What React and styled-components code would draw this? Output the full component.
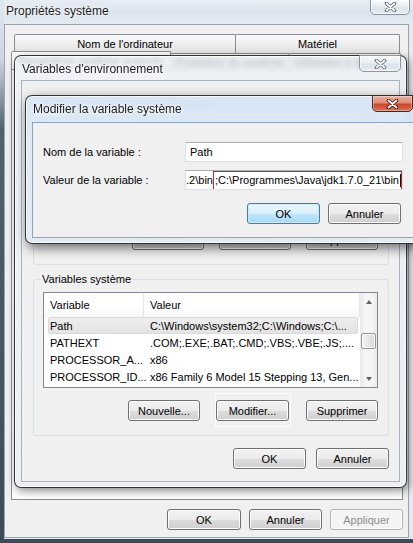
import React from "react";
import styled, { createGlobalStyle } from "styled-components";

const GlobalStyle = createGlobalStyle`
  html, body {
    margin: 0;
    padding: 0;
  }
  body {
    width: 413px;
    height: 543px;
    overflow: hidden;
    background: #3b4959;
    font-family: "Liberation Sans", Arial, sans-serif;
    font-size: 11px;
    color: #000;
  }
`;

const Desktop = styled.div`
  position: relative;
  width: 413px;
  height: 543px;
  overflow: hidden;
`;

// ---- generic window chrome (Win7 aero) ----

const OuterWindow = styled.div`
  height: 543px;
  box-sizing: border-box;
  display: flex;
  flex-direction: column;
  padding: 0 4px 5px 4px;
  background:
    linear-gradient(to bottom, #dfe7ef 0, #cdd6df 60px, #52606f 130px, #3c4a5a 100%) left top / 4px 100% no-repeat,
    linear-gradient(to top, #3b4959 0, #3b4959 4px, transparent 4px),
    linear-gradient(to bottom, #e6edf5 0, #dbe3ec 12px, #e4eaf1 24px, #e3e9f0 100%);
`;

const TitleBar = styled.div`
  display: flex;
  justify-content: space-between;
  align-items: flex-start;
  height: ${(p) => p.$height}px;
  padding-left: ${(p) => p.$pad}px;
  margin: 0 ${(p) => p.$bleed || 0}px;
  flex-shrink: 0;
`;

const TitleText = styled.span`
  padding-top: ${(p) => p.$top}px;
  font-size: 12px;
  color: #1b1b1b;
  text-shadow: 0 0 6px #fff, 0 0 3px #fff;
  white-space: nowrap;
`;

const CloseButton = styled.div`
  width: ${(p) => p.$w}px;
  height: ${(p) => p.$h}px;
  margin-right: ${(p) => p.$right}px;
  margin-top: -1px;
  box-sizing: border-box;
  display: flex;
  align-items: center;
  justify-content: center;
  border: 1px solid ${(p) => (p.$active ? "#5b1e12" : "#8a96a5")};
  border-radius: 0 0 5px 5px;
  background: ${(p) =>
    p.$active
      ? "linear-gradient(to bottom, #eab0a2 0%, #e08c77 45%, #c9472c 55%, #d4735a 100%)"
      : "linear-gradient(to bottom, #f7f9fc 0%, #e9eef4 45%, #dbe3ec 55%, #e6ecf2 100%)"};
  box-shadow: inset 0 0 0 1px rgba(255, 255, 255, ${(p) => (p.$active ? 0.35 : 0.7)});
`;

const CloseGlyph = ({ dark }) => (
  <svg width="13" height="10" viewBox="0 0 13 10">
    <path d="M2.5 1.5 L10.5 8.5 M10.5 1.5 L2.5 8.5" stroke={dark} strokeWidth="3.6" strokeLinecap="round" />
    <path d="M2.5 1.5 L10.5 8.5 M10.5 1.5 L2.5 8.5" stroke="#fff" strokeWidth="1.7" strokeLinecap="round" />
  </svg>
);

const Client = styled.div`
  flex: 1;
  display: flex;
  flex-direction: column;
  min-height: 0;
  border: 1px solid ${(p) => p.$edge};
  background: #f0f0f0;
  padding: ${(p) => p.$pad};
`;

// ---- floating dialogs ----

const Dialog = styled.div`
  position: absolute;
  left: ${(p) => p.$x}px;
  top: ${(p) => p.$y}px;
  width: ${(p) => p.$w}px;
  height: ${(p) => p.$h}px;
  box-sizing: border-box;
  display: flex;
  flex-direction: column;
  padding: 0 6px 5px 6px;
  border: 1px solid rgba(20, 20, 20, 0.85);
  border-radius: 7px;
  background: ${(p) =>
    p.$active
      ? "linear-gradient(to bottom, rgba(214,228,244,0.96), rgba(222,233,246,0.96) 40px, rgba(226,236,247,0.98))"
      : "linear-gradient(to bottom, rgba(233,238,244,0.72), rgba(236,240,245,0.9) 40px, rgba(234,239,244,0.95))"};
  backdrop-filter: blur(2.5px);
  box-shadow: inset 0 0 0 1px rgba(255, 255, 255, 0.75),
    ${(p) => (p.$active ? "2px 4px 12px rgba(0,0,0,0.55)" : "2px 3px 8px rgba(0,0,0,0.45)")};
`;

// ---- tabs ----

const TabArea = styled.div`
  flex: 1;
  display: flex;
  flex-direction: column;
  min-height: 0;
`;

const TabRow = styled.div`
  display: flex;
  align-items: flex-end;
  height: ${(p) => p.$h}px;
  padding-left: ${(p) => p.$indent}px;
  padding-right: 2px;
`;

const Tab = styled.div`
  width: ${(p) => p.$w}px;
  height: ${(p) => (p.$selected ? p.$h + 2 : p.$h)}px;
  box-sizing: border-box;
  display: flex;
  align-items: center;
  justify-content: center;
  border: 1px solid #898c95;
  border-bottom: none;
  margin-right: -1px;
  border-radius: 2px 2px 0 0;
  background: ${(p) =>
    p.$selected ? "#fff" : "linear-gradient(to bottom, #fbfbfb, #eeeeee 50%, #e3e3e3)"};
  white-space: nowrap;
`;

const TabPanel = styled.div`
  flex: 1;
  border: 1px solid #898c95;
  background: #fff;
`;

// ---- buttons ----

const ButtonRow = styled.div`
  display: flex;
  justify-content: flex-end;
  align-items: center;
  gap: ${(p) => p.$gap}px;
  margin-top: ${(p) => p.$top}px;
  padding-right: ${(p) => p.$right || 0}px;
`;

const Button = styled.div`
  width: ${(p) => p.$w || 73}px;
  height: 21px;
  box-sizing: border-box;
  display: flex;
  align-items: center;
  justify-content: center;
  border: 1px solid ${(p) => (p.$default ? "#3c7fb1" : p.$disabled ? "#adb2b5" : "#707070")};
  border-radius: 3px;
  color: ${(p) => (p.$disabled ? "#8d8d8d" : "#000")};
  background: ${(p) =>
    p.$default
      ? "linear-gradient(to bottom, #eaf6fd 0%, #d9f0fc 50%, #bee6fd 51%, #a7d9f5 100%)"
      : p.$disabled
      ? "#f4f4f4"
      : "linear-gradient(to bottom, #f2f2f2 0%, #ebebeb 50%, #dddddd 51%, #cfcfcf 100%)"};
  box-shadow: inset 0 0 0 1px ${(p) => (p.$default ? "#c9e9fa" : "#fcfcfc")};
  white-space: nowrap;
`;

const FocusFrame = styled.div`
  display: flex;
  padding: 6px 1px 5px 0;
  margin: -7px 0 -6px;
  border: 1px solid #fbfbfb;
`;

// ---- group boxes & list view ----

const Group = styled.fieldset`
  margin: 0;
  padding: 6px 10px 14px 9px;
  border: 1px solid #d5dfe5;
  border-radius: 3px;
  min-width: 0;
`;

const Legend = styled.legend`
  padding: 0 2px;
  margin-left: -3px;
  line-height: 13px;
`;

const ListView = styled.div`
  display: flex;
  height: ${(p) => p.$h}px;
  border: 1px solid #828790;
  background: #fff;
`;

const ListBody = styled.div`
  flex: 1;
  display: flex;
  flex-direction: column;
  min-width: 0;
`;

const HeaderRow = styled.div`
  display: grid;
  grid-template-columns: 100px 1fr;
  height: 24px;
  background: linear-gradient(to bottom, #fff, #fff 60%, #f6f7f8);
`;

const HeaderCell = styled.div`
  display: flex;
  align-items: center;
  padding-left: 6px;
  border-right: 1px solid #e5e5e5;
`;

const Row = styled.div`
  display: grid;
  grid-template-columns: 96px 1fr;
  height: 17px;
  box-sizing: border-box;
  margin: 0 2px 0 4px;
  align-items: center;
  white-space: nowrap;
  line-height: 14px;
  border: 1px solid ${(p) => (p.$selected ? "#dadada" : "transparent")};
  border-radius: 2px;
  background: ${(p) => (p.$selected ? "linear-gradient(to bottom, #eeeeee, #e3e3e3)" : "transparent")};
`;

const Cell = styled.span`
  padding-left: ${(p) => p.$pad}px;
`;

const ScrollBar = styled.div`
  width: 17px;
  display: flex;
  flex-direction: column;
  background: linear-gradient(to right, #e9e9e9, #f5f5f5 30%, #f5f5f5 70%, #eaeaea);
`;

const Arrow = styled.div`
  height: 17px;
  display: flex;
  align-items: center;
  justify-content: center;
  &::after {
    content: "";
    border-left: 3.5px solid transparent;
    border-right: 3.5px solid transparent;
    ${(p) => (p.$down ? "border-top: 4px solid #606060;" : "border-bottom: 4px solid #606060;")}
  }
`;

const Track = styled.div`
  flex: 1;
`;

const Thumb = styled.div`
  height: 16px;
  margin: ${(p) => p.$offset}px 1px 0;
  box-sizing: border-box;
  border: 1px solid #979797;
  border-radius: 2px;
  background: linear-gradient(to right, #f4f4f4, #e6e6e6 50%, #d9d9d9);
  box-shadow: inset 0 0 0 1px #fbfbfb;
`;

// ---- edit dialog form ----

const Field = styled.div`
  display: flex;
  align-items: center;
  margin-bottom: ${(p) => p.$gap}px;
`;

const Label = styled.span`
  width: 142px;
  flex-shrink: 0;
`;

const TextBox = styled.div`
  flex: 1;
  height: 20px;
  box-sizing: border-box;
  display: flex;
  align-items: center;
  justify-content: ${(p) => (p.$scrolled ? "flex-end" : "flex-start")};
  padding-left: ${(p) => (p.$scrolled ? 0 : 4)}px;
  overflow: hidden;
  white-space: nowrap;
  border: 1px solid #dde1e7;
  border-top-color: #abadb3;
  background: #fff;
`;

const Highlight = styled.span`
  display: flex;
  align-items: center;
  height: 19px;
  box-sizing: border-box;
  padding-left: 1px;
  border: 1px solid #e41b23;
  flex-shrink: 0;
`;

const Caret = styled.span`
  width: 1px;
  height: 13px;
  margin-left: 1px;
  background: #000;
`;

const Spacer = styled.div`
  height: ${(p) => p.$h}px;
  flex-shrink: 0;
`;

const systemVars = [
  ["Path", "C:\\Windows\\system32;C:\\Windows;C:\\...", true],
  ["PATHEXT", ".COM;.EXE;.BAT;.CMD;.VBS;.VBE;.JS;....", false],
  ["PROCESSOR_A...", "x86", false],
  ["PROCESSOR_ID...", "x86 Family 6 Model 15 Stepping 13, Gen...", false],
];

const VarList = ({ rows, height, thumb }) => (
  <ListView $h={height}>
    <ListBody>
      <HeaderRow>
        <HeaderCell>Variable</HeaderCell>
        <HeaderCell>Valeur</HeaderCell>
      </HeaderRow>
      {rows.map(([name, value, selected]) => (
        <Row key={name} $selected={selected}>
          <Cell $pad={1}>{name}</Cell>
          <Cell $pad={5}>{value}</Cell>
        </Row>
      ))}
    </ListBody>
    <ScrollBar>
      <Arrow />
      <Track>{thumb != null && <Thumb $offset={thumb} />}</Track>
      <Arrow $down />
    </ScrollBar>
  </ListView>
);

const App = () => {
  return (
    <Desktop>
      <GlobalStyle />
      <OuterWindow>
        <TitleBar $height={24} $pad={6} $bleed={-4}>
          <TitleText $top={4}>Propriétés système</TitleText>
          <CloseButton $w={40} $h={16} $right={3}>
            <CloseGlyph dark="#5e6773" />
          </CloseButton>
        </TitleBar>
        <Client $edge="#9aa3ad" $pad="9px 5px 7px 6px">
          <TabArea>
            <TabRow $h={19} $indent={3}>
              <Tab $w={222} $h={19}>Nom de l'ordinateur</Tab>
              <Tab $w={165} $h={19}>Matériel</Tab>
            </TabRow>
            <TabRow $h={16} $indent={0}>
              <Tab $w={160} $h={16} $selected>Paramètres système avancés</Tab>
              <Tab $w={119} $h={16}>Protection du système</Tab>
              <Tab $w={113} $h={16}>Utilisation à distance</Tab>
            </TabRow>
            <TabPanel />
          </TabArea>
          <ButtonRow $gap={8} $top={9} $right={0}>
            <Button $w={74}>OK</Button>
            <Button>Annuler</Button>
            <Button $disabled>Appliquer</Button>
          </ButtonRow>
        </Client>
      </OuterWindow>

      <Dialog $x={14} $y={55} $w={393} $h={433}>
        <TitleBar $height={24} $pad={1}>
          <TitleText $top={6}>Variables d'environnement</TitleText>
          <CloseButton $w={42} $h={17} $right={-1}>
            <CloseGlyph dark="#5e6773" />
          </CloseButton>
        </TitleBar>
        <Client $edge="#a6b2c0" $pad="18px 10px 13px 11px">
          <Group>
            <Legend>Variables utilisateur pour Utilisateur</Legend>
            <VarList rows={[]} height={97} />
            <ButtonRow $gap={15} $top={12}>
              <Button $w={72}>Nouvelle...</Button>
              <Button $w={72}>Modifier...</Button>
              <Button $w={72}>Supprimer</Button>
            </ButtonRow>
          </Group>
          <Spacer $h={8} />
          <Group>
            <Legend>Variables système</Legend>
            <VarList rows={systemVars} height={94} thumb={23} />
            <ButtonRow $gap={15} $top={12}>
              <Button $w={72}>Nouvelle...</Button>
              <FocusFrame>
                <Button $w={73}>Modifier...</Button>
              </FocusFrame>
              <Button $w={72}>Supprimer</Button>
            </ButtonRow>
          </Group>
          <ButtonRow $gap={10} $top={12}>
            <Button>OK</Button>
            <Button>Annuler</Button>
          </ButtonRow>
        </Client>
      </Dialog>

      <Dialog $x={25} $y={95} $w={396} $h={149} $active>
        <TitleBar $height={26} $pad={1}>
          <TitleText $top={6}>Modifier la variable système</TitleText>
          <CloseButton $w={41} $h={17} $right={1} $active>
            <CloseGlyph dark="#4a1208" />
          </CloseButton>
        </TitleBar>
        <Client $edge="#8fa4bd" $pad="19px 10px 12px 10px">
          <Field $gap={8}>
            <Label>Nom de la variable :</Label>
            <TextBox>Path</TextBox>
          </Field>
          <Field $gap={0}>
            <Label>Valeur de la variable :</Label>
            <TextBox $scrolled>
              <span>.2\bin</span>
              <Highlight>
                ;C:\Programmes\Java\jdk1.7.0_21\bin
                <Caret />
              </Highlight>
            </TextBox>
          </Field>
          <ButtonRow $gap={8} $top={13} $right={2}>
            <Button $default>OK</Button>
            <Button>Annuler</Button>
          </ButtonRow>
        </Client>
      </Dialog>
    </Desktop>
  );
};

export default App;
